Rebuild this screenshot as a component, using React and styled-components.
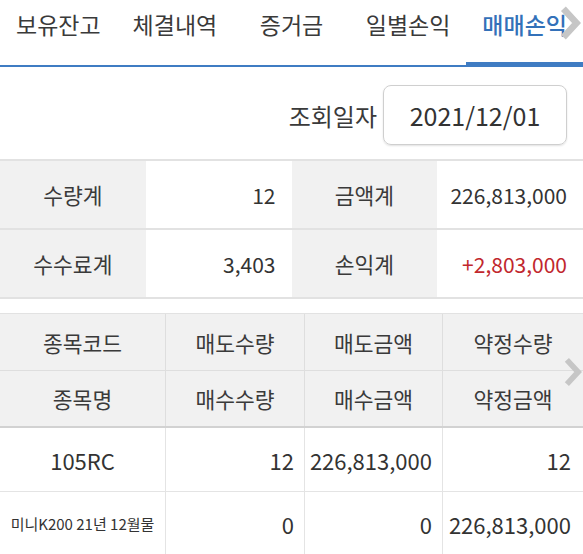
import styled, { createGlobalStyle } from 'styled-components'

const GlobalStyle = createGlobalStyle`
  html, body {
    margin: 0;
    padding: 0;
    background: #ffffff;
  }
  body {
    font-family: "Noto Sans CJK KR", "Noto Sans", sans-serif;
    color: #333333;
    width: 583px;
    overflow: hidden;
  }
`

const tabs = ['보유잔고', '체결내역', '증거금', '일별손익', '매매손익']

const summary = [
  ['수량계', '12', '금액계', '226,813,000'],
  ['수수료계', '3,403', '손익계', '+2,803,000'],
]

const rows = [
  { cells: ['105RC', '12', '226,813,000', '12'] },
  { cells: ['미니K200 21년 12월물', '0', '0', '226,813,000'], small: true },
]

function Chevron({ w, h }) {
  return (
    <svg width={w} height={h} viewBox="0 0 20 32">
      <path d="M4 3 L16 16 L4 29" fill="none" stroke="#c6c6c6" strokeWidth="6" strokeLinejoin="miter" />
    </svg>
  )
}

export default function App() {
  return (
    <Page>
      <GlobalStyle />
      <TabBar>
        {tabs.map((t, i) => (
          <Tab key={t} $active={i === tabs.length - 1}>{t}</Tab>
        ))}
        <TabArrow><Chevron w={22} h={40} /></TabArrow>
      </TabBar>

      <DateRow>
        <DateLabel>조회일자</DateLabel>
        <DateBox>2021/12/01</DateBox>
      </DateRow>

      <Summary>
        {summary.map((r) => (
          <SumRow key={r[0]}>
            <SumLabel>{r[0]}</SumLabel>
            <SumValue>{r[1]}</SumValue>
            <SumLabel>{r[2]}</SumLabel>
            <SumValue $red={r[3].startsWith('+')}>{r[3]}</SumValue>
          </SumRow>
        ))}
      </Summary>

      <Table>
        <HeadRow>
          <HeadCell>종목코드</HeadCell>
          <HeadCell>매도수량</HeadCell>
          <HeadCell>매도금액</HeadCell>
          <HeadCell>약정수량</HeadCell>
        </HeadRow>
        <HeadRow $last>
          <HeadCell>종목명</HeadCell>
          <HeadCell>매수수량</HeadCell>
          <HeadCell>매수금액</HeadCell>
          <HeadCell>약정금액</HeadCell>
        </HeadRow>
        {rows.map((r) => (
          <DataRow key={r.cells[0]}>
            <NameCell $small={r.small}>{r.cells[0]}</NameCell>
            <NumCell>{r.cells[1]}</NumCell>
            <NumCell>{r.cells[2]}</NumCell>
            <NumCell>{r.cells[3]}</NumCell>
          </DataRow>
        ))}
        <TableArrow><Chevron w={19} h={30} /></TableArrow>
      </Table>
    </Page>
  )
}

const Page = styled.div`
  width: 583px;
  height: 554px;
  overflow: hidden;
  background: #fff;
`

const TabBar = styled.nav`
  position: relative;
  display: grid;
  grid-template-columns: repeat(5, 1fr);
  height: 65px;
  border-bottom: 2px solid #3f7cc3;
`

const Tab = styled.div`
  display: flex;
  justify-content: center;
  align-items: flex-start;
  padding-top: 7px;
  font-size: 23px;
  line-height: 34px;
  color: ${(p) => (p.$active ? '#3371b9' : '#3a3a3a')};
  font-weight: ${(p) => (p.$active ? 500 : 400)};
  box-shadow: ${(p) => (p.$active ? 'inset 0 -3px 0 #3f7cc3' : 'none')};
  white-space: nowrap;
`

const TabArrow = styled.div`
  position: absolute;
  right: 2px;
  top: 3px;
  display: flex;
`

const DateRow = styled.div`
  display: flex;
  justify-content: flex-end;
  align-items: center;
  gap: 6px;
  padding: 18px 16px 14px;
`

const DateLabel = styled.span`
  font-size: 24px;
  color: #3a3a3a;
`

const DateBox = styled.div`
  width: 184px;
  height: 60px;
  box-sizing: border-box;
  border: 1px solid #cfcfcf;
  border-radius: 8px;
  box-shadow: 0 1px 2px rgba(0, 0, 0, 0.12);
  display: flex;
  align-items: center;
  justify-content: center;
  font-size: 25px;
  color: #333;
`

const Summary = styled.div`
  border-top: 2px solid #e2e2e2;
`

const SumRow = styled.div`
  display: grid;
  grid-template-columns: repeat(4, 1fr);
  height: 67px;
  border-bottom: 2px solid #e2e2e2;
`

const SumLabel = styled.div`
  background: #f1f1f1;
  display: flex;
  align-items: center;
  justify-content: center;
  font-size: 21.5px;
  color: #3a3a3a;
`

const SumValue = styled.div`
  display: flex;
  align-items: center;
  justify-content: flex-end;
  padding-right: 16px;
  font-size: 21px;
  color: ${(p) => (p.$red ? '#c1272d' : '#333')};
`

const Table = styled.div`
  position: relative;
  margin-top: 14px;
  border-top: 1px solid #e2e2e2;
`

const cols = '166px 139px 138px 140px'

const HeadRow = styled.div`
  display: grid;
  grid-template-columns: ${cols};
  height: ${(p) => (p.$last ? '55px' : '56px')};
  background: #f1f1f1;
  border-bottom: ${(p) => (p.$last ? '2px solid #d2d2d2' : '1px solid #dedede')};
`

const HeadCell = styled.div`
  display: flex;
  align-items: center;
  justify-content: center;
  font-size: 21.5px;
  color: #3a3a3a;
  border-right: 1px solid #dedede;
  &:last-child {
    border-right: none;
  }
`

const DataRow = styled.div`
  display: grid;
  grid-template-columns: ${cols};
  height: 63px;
  border-bottom: 1px solid #e4e4e4;
`

const NameCell = styled.div`
  display: flex;
  align-items: center;
  justify-content: center;
  font-size: ${(p) => (p.$small ? '15px' : '22px')};
  color: #333;
  border-right: 1px solid #e4e4e4;
  white-space: nowrap;
`

const NumCell = styled.div`
  display: flex;
  align-items: center;
  justify-content: flex-end;
  padding-right: 10px;
  font-size: 22px;
  color: #333;
  border-right: 1px solid #e4e4e4;
  &:last-child {
    border-right: none;
    padding-right: 12px;
  }
`

const TableArrow = styled.div`
  position: absolute;
  right: 1px;
  top: 43px;
  display: flex;
`
